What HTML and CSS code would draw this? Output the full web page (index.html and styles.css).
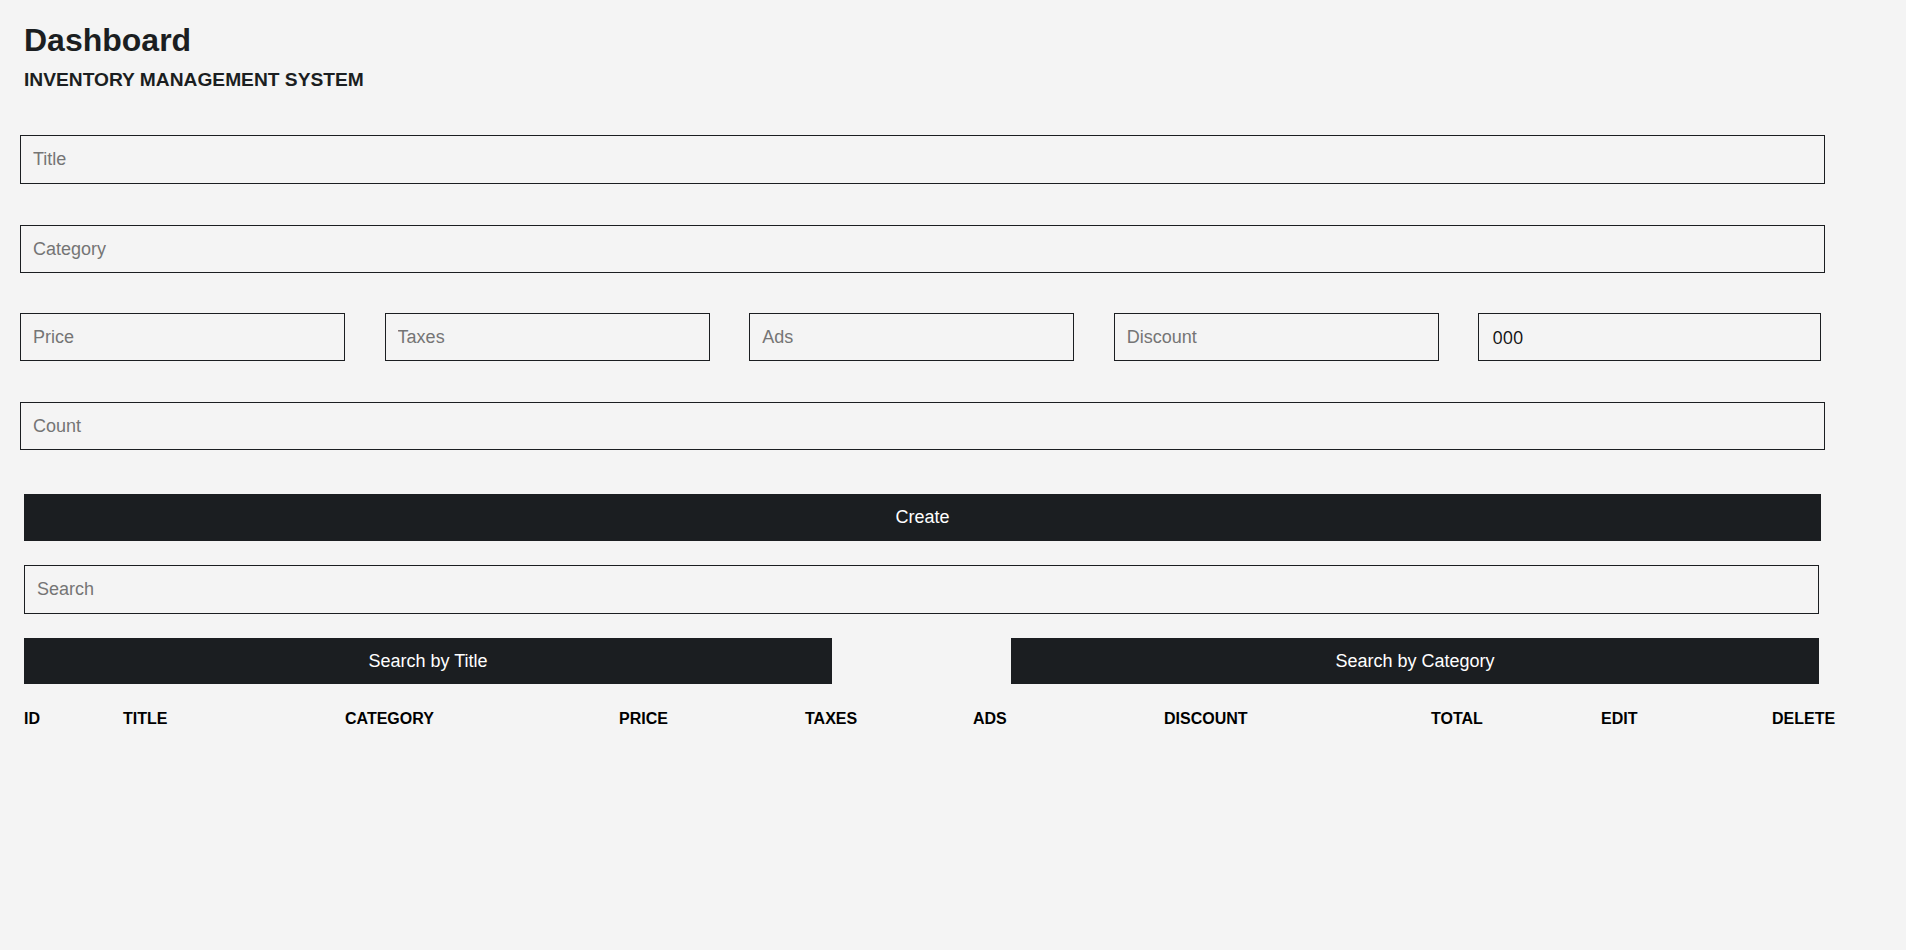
FILE: index.html
```html
<!DOCTYPE html>
<html lang="en">
<head>
<meta charset="utf-8">
<title>Dashboard</title>
<link rel="stylesheet" href="styles.css">
</head>
<body>
<div class="page">
  <header class="head">
    <h1 class="head-title">Dashboard</h1>
    <h3 class="head-sub">INVENTORY MANAGEMENT SYSTEM</h3>
  </header>

  <form class="form">
    <input class="field field-wide field-first" type="text" placeholder="Title">
    <input class="field field-wide gap-b" type="text" placeholder="Category">
    <div class="price-row">
      <input class="field field-small" type="number" placeholder="Price">
      <input class="field field-small" type="number" placeholder="Taxes">
      <input class="field field-small" type="number" placeholder="Ads">
      <input class="field field-small" type="number" placeholder="Discount">
      <div class="field field-total">000</div>
    </div>
    <input class="field field-wide gap-a" type="number" placeholder="Count">
    <button class="btn btn-create" type="button">Create</button>
  </form>

  <div class="search">
    <input class="field field-search" type="text" placeholder="Search">
    <div class="search-buttons">
      <button class="btn btn-search" type="button">Search by Title</button>
      <button class="btn btn-search" type="button">Search by Category</button>
    </div>
  </div>

  <table class="grid">
    <colgroup>
      <col class="c-id"><col class="c-title"><col class="c-category"><col class="c-price"><col class="c-taxes">
      <col class="c-ads"><col class="c-discount"><col class="c-total"><col class="c-edit"><col class="c-delete">
    </colgroup>
    <thead>
      <tr>
        <th>ID</th><th>TITLE</th><th>CATEGORY</th><th>PRICE</th><th>TAXES</th>
        <th>ADS</th><th>DISCOUNT</th><th>TOTAL</th><th>EDIT</th><th>DELETE</th>
      </tr>
    </thead>
    <tbody></tbody>
  </table>
</div>
</body>
</html>
```

FILE: styles.css
```css
html, body {
  margin: 0;
  background: #f4f4f4;
}

body {
  font-family: "Liberation Sans", Arial, sans-serif;
  color: #1b1e21;
}

.page {
  padding-left: 24px;
  width: 1797px;
}

.head-title {
  font-size: 32px;
  font-weight: 700;
  line-height: normal;
  margin: 22px 0 0;
}

.head-sub {
  font-size: 19.2px;
  font-weight: 700;
  line-height: normal;
  margin: 10px 0 0;
}

.form {
  margin-top: 44px;
  display: flex;
  flex-direction: column;
}

.field {
  box-sizing: border-box;
  display: block;
  height: 48px;
  border: 1px solid #1b1e21;
  border-radius: 0;
  background: transparent;
  padding: 0 12px;
  font-family: "Liberation Sans", Arial, sans-serif;
  font-size: 18px;
  color: #1b1e21;
  outline: none;
  margin: 0;
}

.field::placeholder {
  color: #757575;
}

.field[type="number"] {
  -moz-appearance: textfield;
}

.field::-webkit-outer-spin-button,
.field::-webkit-inner-spin-button {
  -webkit-appearance: none;
  margin: 0;
}

.field-wide {
  width: 1805px;
  margin-left: -4px;
}

.field-first {
  height: 49px;
}

.gap-b {
  margin-top: 41px;
  margin-bottom: 40px;
}

.gap-a {
  margin-top: 41px;
}

.price-row {
  display: flex;
  gap: 39.5px;
  margin-left: -4px;
}

.field-small {
  width: 325.5px;
}

.field-total {
  width: 343px;
  display: flex;
  align-items: center;
  padding-left: 13px;
  padding-bottom: 1px;
  font-family: "Open Sans", "Noto Sans", sans-serif;
  font-size: 18px;
  color: #111;
}

.btn {
  border: none;
  border-radius: 0;
  background: #1b1e21;
  color: #ffffff;
  font-family: "Liberation Sans", Arial, sans-serif;
  font-size: 18px;
  padding: 0;
  cursor: pointer;
}

.btn-create {
  margin-top: 44px;
  width: 1797px;
  height: 47px;
}

.search {
  margin-top: 24px;
  width: 1795px;
}

.field-search {
  width: 1795px;
  height: 49px;
}

.search-buttons {
  margin-top: 24px;
  display: flex;
  justify-content: space-between;
}

.btn-search {
  width: 808px;
  height: 46px;
}

.grid {
  margin-top: 26px;
  border-collapse: collapse;
  table-layout: fixed;
  width: 1860px;
}

.grid th {
  padding: 0;
  text-align: left;
  font-size: 16px;
  font-weight: 700;
  line-height: 18px;
  color: #000;
}

.c-id { width: 99px; }
.c-title { width: 222px; }
.c-category { width: 274px; }
.c-price { width: 186px; }
.c-taxes { width: 168px; }
.c-ads { width: 191px; }
.c-discount { width: 267px; }
.c-total { width: 170px; }
.c-edit { width: 171px; }
.c-delete { width: 112px; }
```
